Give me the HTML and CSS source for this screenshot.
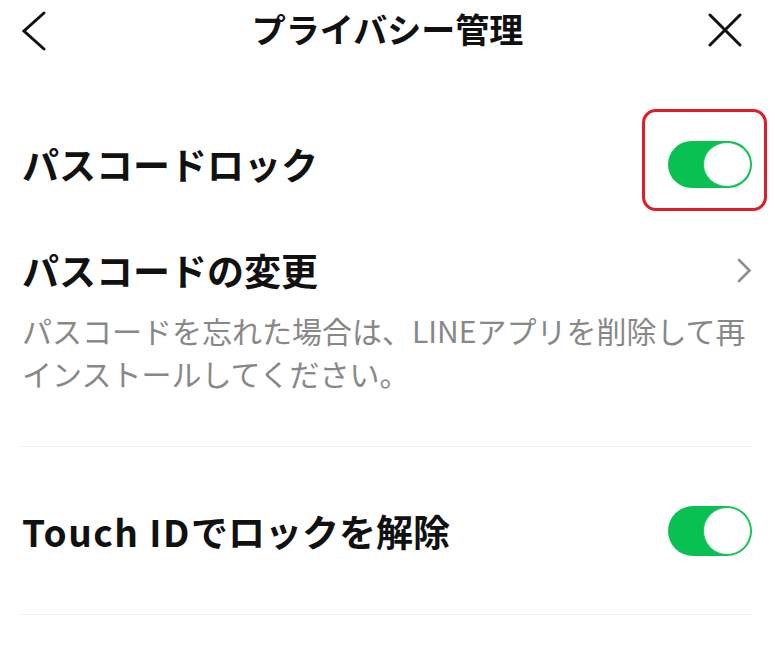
FILE: index.html
```html
<!DOCTYPE html>
<html lang="ja">
<head>
<meta charset="utf-8">
<title>プライバシー管理</title>
<link rel="stylesheet" href="styles.css">
</head>
<body>
<div class="page">
  <header class="header">
    <span class="back">
      <svg width="26" height="40" viewBox="0 0 26 40"><path d="M22 2 L2 20 L22 38" fill="none" stroke="#111" stroke-width="3" stroke-linecap="round" stroke-linejoin="miter"/></svg>
    </span>
    <h1 class="title">プライバシー管理</h1>
    <span class="close">
      <svg width="34" height="34" viewBox="0 0 34 34"><path d="M2 2 L32 32 M32 2 L2 32" fill="none" stroke="#111" stroke-width="3" stroke-linecap="round"/></svg>
    </span>
  </header>

  <div class="content">
    <div class="row row-lock">
      <span class="label">パスコードロック</span>
      <span class="toggle-wrap">
        <span class="toggle on"><span class="knob"></span></span>
        <span class="highlight"></span>
      </span>
    </div>

    <div class="row row-change">
      <span class="label">パスコードの変更</span>
      <svg class="chev" width="16" height="25" viewBox="0 0 16 25"><path d="M3 2 L13.5 12.5 L3 23" fill="none" stroke="#8e8e8e" stroke-width="2.6" stroke-linecap="round"/></svg>
    </div>
    <p class="desc">パスコードを忘れた場合は、LINEアプリを削除して再<br>インストールしてください。</p>

    <div class="sep sep1"></div>

    <div class="row row-touch">
      <span class="label"><span class="latin">Touch ID</span>でロックを解除</span>
      <span class="toggle on tall"><span class="knob"></span></span>
    </div>

    <div class="sep sep2"></div>
  </div>
</div>
</body>
</html>
```

FILE: styles.css
```css
html, body {
  margin: 0;
  padding: 0;
  background: #ffffff;
}
body {
  font-family: "Noto Sans CJK JP", "Noto Sans", "Liberation Sans", sans-serif;
  color: #111111;
}
.page {
  width: 775px;
  height: 666px;
  overflow: hidden;
}
.header {
  height: 62px;
  display: grid;
  grid-template-columns: 90px 1fr 90px;
  align-items: center;
}
.back {
  display: flex;
  align-items: center;
  padding-left: 22px;
}
.back svg { display: block; }
.close {
  display: flex;
  justify-content: flex-end;
  padding-right: 33px;
  margin-top: -2px;
}
.close svg { display: block; }
.title {
  margin: 0;
  text-align: center;
  font-size: 34px;
  font-weight: 700;
  line-height: 62px;
  margin-top: -4px;
}
.content {
  padding: 0 23px 0 21px;
  display: flex;
  flex-direction: column;
}
.row {
  display: flex;
  align-items: center;
  justify-content: space-between;
  padding-left: 1px;
}
.label {
  font-size: 37px;
  font-weight: 700;
  line-height: 48px;
  color: #111111;
}
.latin {
  letter-spacing: 1.5px;
}
.row-lock {
  height: 48px;
  margin-top: 78px;
}
.row-change {
  height: 48px;
  margin-top: 58px;
}
.row-touch {
  height: 52px;
  margin-top: 58px;
}
.chev {
  display: block;
}
.desc {
  margin: 15px 0 0 1px;
  font-size: 30px;
  line-height: 43px;
  color: #888888;
  font-weight: 400;
}
.sep {
  height: 1px;
  background: #eeeeee;
  margin-left: -1px;
}
.sep1 { margin-top: 51px; }
.sep2 { margin-top: 57px; }

.toggle-wrap {
  position: relative;
  display: block;
}
.toggle {
  display: flex;
  justify-content: flex-end;
  align-items: center;
  width: 84px;
  height: 47px;
  border-radius: 24px;
  background: #08c152;
  box-sizing: border-box;
  padding: 2px;
}
.toggle.tall {
  height: 50px;
  border-radius: 25px;
}
.knob {
  display: block;
  width: 46px;
  height: 43px;
  border-radius: 50%;
  background: #ffffff;
  box-shadow: 0 0 0 1px #34c46b;
}
.toggle.tall .knob {
  height: 46px;
}
.highlight {
  position: absolute;
  left: -26px;
  right: -15px;
  top: -32px;
  bottom: -23px;
  border: 3px solid #e11c24;
  border-radius: 14px;
  pointer-events: none;
}
```
